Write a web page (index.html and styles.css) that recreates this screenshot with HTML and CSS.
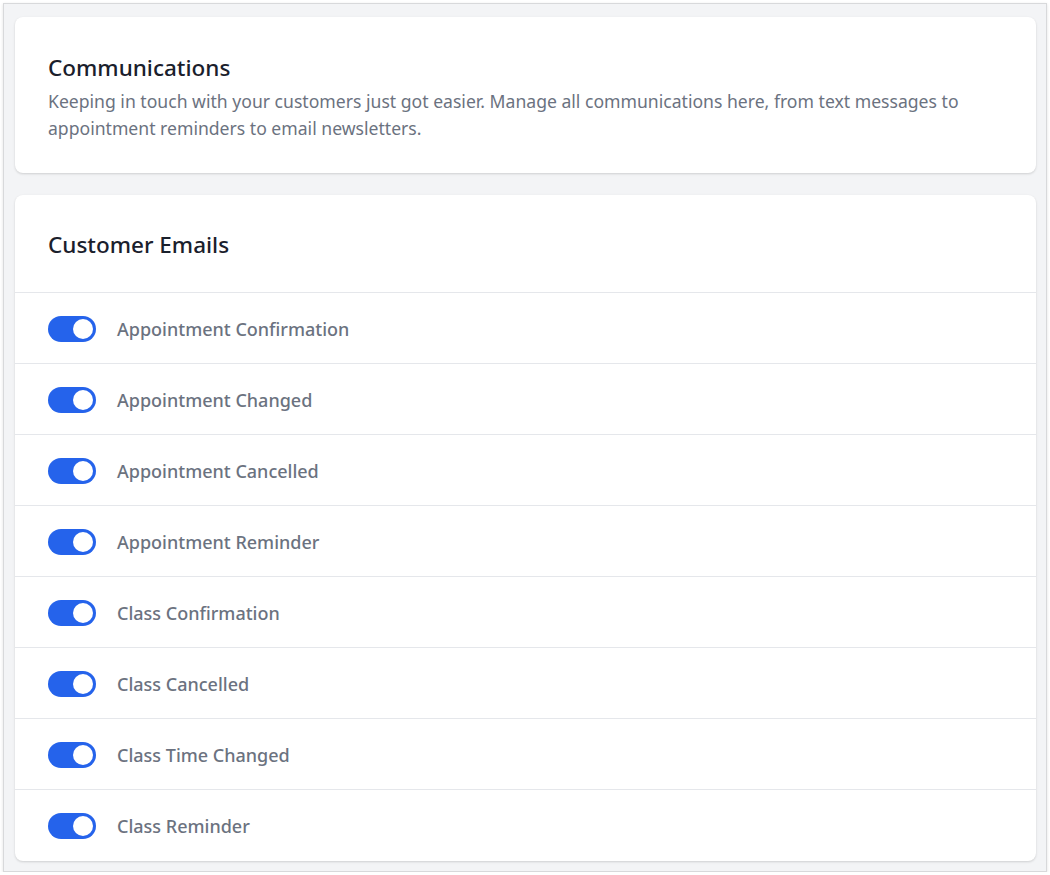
FILE: index.html
```html
<!DOCTYPE html>
<html>
<head>
<meta charset="utf-8">
<link rel="stylesheet" href="styles.css">
</head>
<body>
<div class="frame">
  <section class="card intro">
    <h1 class="title">Communications</h1>
    <p class="desc">Keeping in touch with your customers just got easier. Manage all communications here, from text messages to appointment reminders to email newsletters.</p>
  </section>
  <section class="card list">
    <div class="list-head"><h2 class="title">Customer Emails</h2></div>
    <div class="row"><span class="toggle"><span class="knob"></span></span><span class="label">Appointment Confirmation</span></div>
    <div class="row"><span class="toggle"><span class="knob"></span></span><span class="label">Appointment Changed</span></div>
    <div class="row"><span class="toggle"><span class="knob"></span></span><span class="label">Appointment Cancelled</span></div>
    <div class="row"><span class="toggle"><span class="knob"></span></span><span class="label">Appointment Reminder</span></div>
    <div class="row"><span class="toggle"><span class="knob"></span></span><span class="label">Class Confirmation</span></div>
    <div class="row"><span class="toggle"><span class="knob"></span></span><span class="label">Class Cancelled</span></div>
    <div class="row"><span class="toggle"><span class="knob"></span></span><span class="label">Class Time Changed</span></div>
    <div class="row last"><span class="toggle"><span class="knob"></span></span><span class="label">Class Reminder</span></div>
  </section>
</div>
</body>
</html>
```
FILE: styles.css
```css
* { box-sizing: border-box; }
html, body { margin: 0; padding: 0; background: #ffffff; }
body { font-family: "Noto Sans", "Open Sans", sans-serif; }
.frame {
  margin: 3px 0 0 3px;
  width: 1044px;
  height: 869px;
  border: 1px solid #d8d9db;
  background: #f3f4f6;
  padding: 13px 10px 0 11px;
  display: flex;
  flex-direction: column;
  gap: 22px;
  overflow: hidden;
  box-shadow: 0 1px 3px rgba(0,0,0,0.12);
}
.card {
  background: #ffffff;
  border-radius: 8px;
  box-shadow: 0 1px 3px rgba(0,0,0,0.1), 0 1px 2px rgba(0,0,0,0.06);
}
.intro { padding: 36px 33px 31px; height: 156px; }
.title {
  margin: 0;
  font-size: 22.5px;
  line-height: 30px;
  font-weight: 500;
  color: #1a202c;
}
.desc {
  margin: 5px 0 0;
  font-size: 17.6px;
  line-height: 27px;
  color: #6b7280;
}
.list { height: 666px; display: flex; flex-direction: column; }
.list-head { padding: 35px 33px 32px; border-bottom: 1px solid #e5e7eb; }
.row {
  height: 71px;
  display: flex;
  align-items: center;
  gap: 21px;
  padding: 1px 33px 0;
  border-bottom: 1px solid #e5e7eb;
}
.row.last { border-bottom: none; flex: 1; }
.toggle {
  width: 48px;
  height: 26px;
  border-radius: 13px;
  background: #2563eb;
  display: flex;
  align-items: center;
  justify-content: flex-end;
  padding: 0 3px;
  flex-shrink: 0;
}
.knob {
  width: 20px;
  height: 20px;
  border-radius: 50%;
  background: #ffffff;
}
.label {
  font-size: 18px;
  font-weight: 500;
  color: #6b7280;
}
```
